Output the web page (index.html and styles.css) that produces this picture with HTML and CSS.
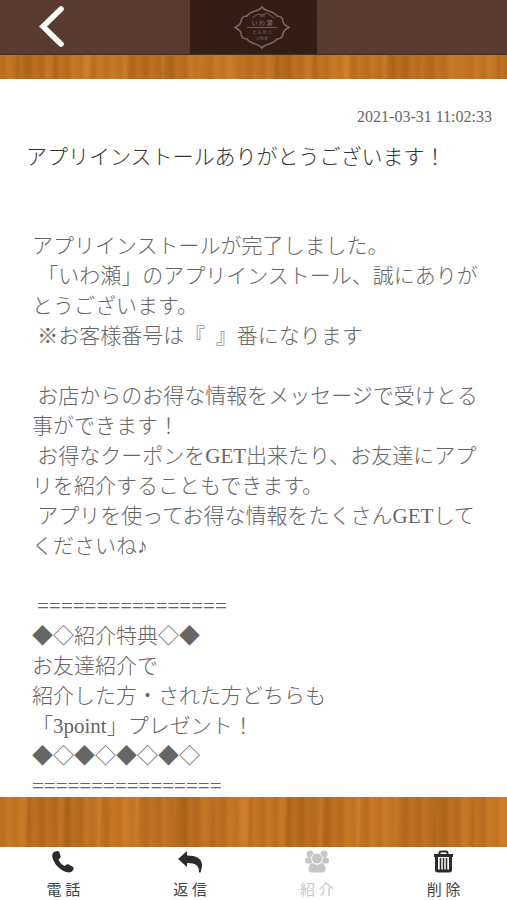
FILE: index.html
```
<!DOCTYPE html>
<html lang="ja">
<head>
    <meta charset="utf-8">
    <meta name="viewport" content="width=device-width, initial-scale=1">
    <title>いわ瀬</title>
    <link rel="stylesheet" href="styles.css">
</head>
<body>
<header class="header">
    <button type="button" class="back" aria-label="戻る">
        <svg width="26" height="42" viewBox="0 0 26 42">
            <path d="M22 3 L4 20.5 L22 38" fill="none" stroke="#fff" stroke-width="5.500" stroke-linecap="round"/>
        </svg>
    </button>
    <div class="logo">
        <svg width="56" height="43" viewBox="0 0 56 43">
            <path d="M28 1 C31 6 39 4 43 10 C47 10 49 12 49 16 C50 19 52 20 55 21.500 C52 23 50 24 49 27 C49 31 47 33 43 33 C39 39 31 37 28 42 C25 37 17 39 13 33 C9 33 7 31 7 27 C6 24 4 23 1 21.500 C4 20 6 19 7 16 C7 12 9 10 13 10 C17 4 25 6 28 1 Z" fill="none" stroke="#806660" stroke-width="1.500"/>
            <path d="M18 12 L24 8 L28 9 L33 7 L40 12 M26 10 H31 M13 21.500 H43" fill="none" stroke="#735a54" stroke-width="1"/>
            <text x="28" y="19" class="logo-name">い わ 瀬</text>
            <text x="28" y="28" class="logo-sub">と ん か つ</text>
            <text x="28" y="34" class="logo-sub">いわせ</text>
        </svg>
    </div>
</header>

<main class="message">
    <time class="date" datetime="2021-03-31T11:02:33">2021-03-31 11:02:33</time>
    <h1 class="title">アプリインストールありがとうございます！</h1>
    <p class="body">アプリインストールが完了しました。
 「いわ瀬」のアプリインストール、誠にありがとうございます。
 ※お客様番号は『  』番になります

 お店からのお得な情報をメッセージで受けとる事ができます！
 お得なクーポンをGET出来たり、お友達にアプリを紹介することもできます。
 アプリを使ってお得な情報をたくさんGETしてくださいね♪

 ================
◆◇紹介特典◇◆
お友達紹介で
紹介した方・された方どちらも
「3point」プレゼント！
◆◇◆◇◆◇◆◇
================</p>
</main>

<footer class="footer">
    <button type="button" class="tab">
        <svg width="24" height="24" viewBox="0 0 24 24">
            <path d="M4 1.500 C6 0.500 8 1 8.500 2.500 L9.500 6 C9.800 7.800 9 8.500 7.500 9.500 C8.500 12.500 11 15 14 16 C15 14.500 16.300 14 17.800 14.500 L21.500 16.500 C23 17.500 22.800 19 22 20.300 C20.500 22.500 17.500 23 15 22 C8 19.500 3.500 14 1.500 8 C0.700 5 1.500 2.500 4 1.500 Z" fill="#2b2b2b"/>
        </svg>
        <span>電 話</span>
    </button>
    <button type="button" class="tab">
        <svg width="24" height="24" viewBox="0 0 24 24">
            <path d="M0 9 L9 1 V5.500 C18 5.500 24 8.500 24 15 C24 18 23 20.500 22.500 22.500 H21 C21.500 16 18 13 9 13 V17 Z" fill="#2b2b2b"/>
        </svg>
        <span>返 信</span>
    </button>
    <button type="button" class="tab" disabled>
        <svg width="24" height="24" viewBox="0 0 24 24" fill="#c6c6c6">
            <circle cx="5" cy="4" r="3.500"/>
            <circle cx="19" cy="4" r="3.500"/>
            <rect x="0" y="7.500" width="7.500" height="6" rx="2.500"/>
            <rect x="16.500" y="7.500" width="7.500" height="6" rx="2.500"/>
            <path d="M8 13 Q12 16 16 13 C19 13.500 20.500 16 20.500 19 C20.500 21.500 19 22.500 17 22.500 H7 C5 22.500 3.500 21.500 3.500 19 C3.500 16 5 13.500 8 13 Z"/>
            <circle cx="12" cy="8.500" r="5.500" stroke="#fff" stroke-width="1"/>
        </svg>
        <span>紹 介</span>
    </button>
    <button type="button" class="tab">
        <svg width="24" height="24" viewBox="0 0 24 24" fill="none" stroke="#2b2b2b">
            <path d="M7.500 5 V3 Q7.500 1.500 9 1.500 H14 Q15.500 1.500 15.500 3 V5" stroke-width="2"/>
            <path d="M2 5.500 H21" stroke-width="3"/>
            <path d="M4.500 7 V20 Q4.500 21 6 21 H17 Q18.500 21 18.500 20 V7" stroke-width="3"/>
            <path d="M8.500 8 V20 M11.500 8 V20 M14.500 8 V20" stroke-width="1.500"/>
        </svg>
        <span>削 除</span>
    </button>
</footer>
</body>
</html>
```

FILE: styles.css
```
* {
    box-sizing: border-box;
}

body {
    margin: 0;
    height: 100vh;
    display: flex;
    flex-direction: column;
    font-family: "Liberation Serif", "Noto Sans CJK JP", serif;
    color: #666;
    /* wood grain */
    background-color: #bf721f;
    background-image:
        repeating-linear-gradient(90deg, rgba(90, 40, 0, 0) 0, rgba(90, 40, 0, 0.06) 3px, rgba(90, 40, 0, 0) 5px, rgba(255, 180, 80, 0.1) 8px, rgba(90, 40, 0, 0) 13px),
        repeating-linear-gradient(92deg, rgba(90, 40, 0, 0) 0, rgba(255, 180, 80, 0.1) 17px, rgba(90, 40, 0, 0.06) 20px, rgba(90, 40, 0, 0) 37px),
        repeating-linear-gradient(88deg, rgba(255, 170, 60, 0.08) 0, rgba(90, 40, 0, 0.14) 61px, rgba(255, 170, 60, 0.08) 125px);
}

button {
    border: 0;
    padding: 0;
    background: none;
    font: inherit;
    color: inherit;
}

/* header */
.header {
    flex: none;
    display: grid;
    grid-template-columns: 1fr 25% 1fr;
    height: 55px;
    border-bottom: 1px solid #48301f;
    background-color: #593b31;
    background-image:
        repeating-linear-gradient(0deg, rgba(0, 0, 0, 0.03) 0, rgba(0, 0, 0, 0.03) 1px, transparent 1px, transparent 3px),
        repeating-linear-gradient(90deg, rgba(255, 255, 255, 0.01) 0, rgba(255, 255, 255, 0.01) 1px, transparent 1px, transparent 5px);
}

.back {
    justify-self: start;
    display: flex;
    align-items: center;
    padding-left: 39px;
}

.logo {
    display: flex;
    align-items: center;
    justify-content: center;
    padding-left: 16px;
    background: #321d17;
}

.logo-name,
.logo-sub {
    text-anchor: middle;
    fill: #8d746d;
}

.logo-name {
    font-size: 6px;
}

.logo-sub {
    font-size: 4px;
}

/* message */
.message {
    flex: 1;
    min-height: 0;
    margin: 24px 0 50px;
    padding: 28px 24px 0 32px;
    overflow: hidden auto;
    scrollbar-width: none;
    background: #fff;
}

.date {
    display: block;
    margin-right: -9px;
    font-size: 16px;
    line-height: 20px;
    text-align: right;
}

.title {
    margin: 15px 0 59px -6px;
    font-size: 21px;
    font-weight: 300;
    line-height: 30px;
    color: #333;
}

.body {
    margin: 0;
    font-size: 21px;
    font-weight: 300;
    line-height: 30px;
    white-space: pre-wrap;
}

/* footer */
.footer {
    flex: none;
    display: grid;
    grid-template-columns: repeat(4, 1fr);
    height: 53px;
    background: #fff;
}

.tab {
    display: flex;
    flex-direction: column;
    align-items: center;
    gap: 7px;
    padding-top: 3px;
    font-size: 15px;
    line-height: 18px;
    color: #444;
}

.tab:disabled {
    color: #c6c6c6;
}
```
